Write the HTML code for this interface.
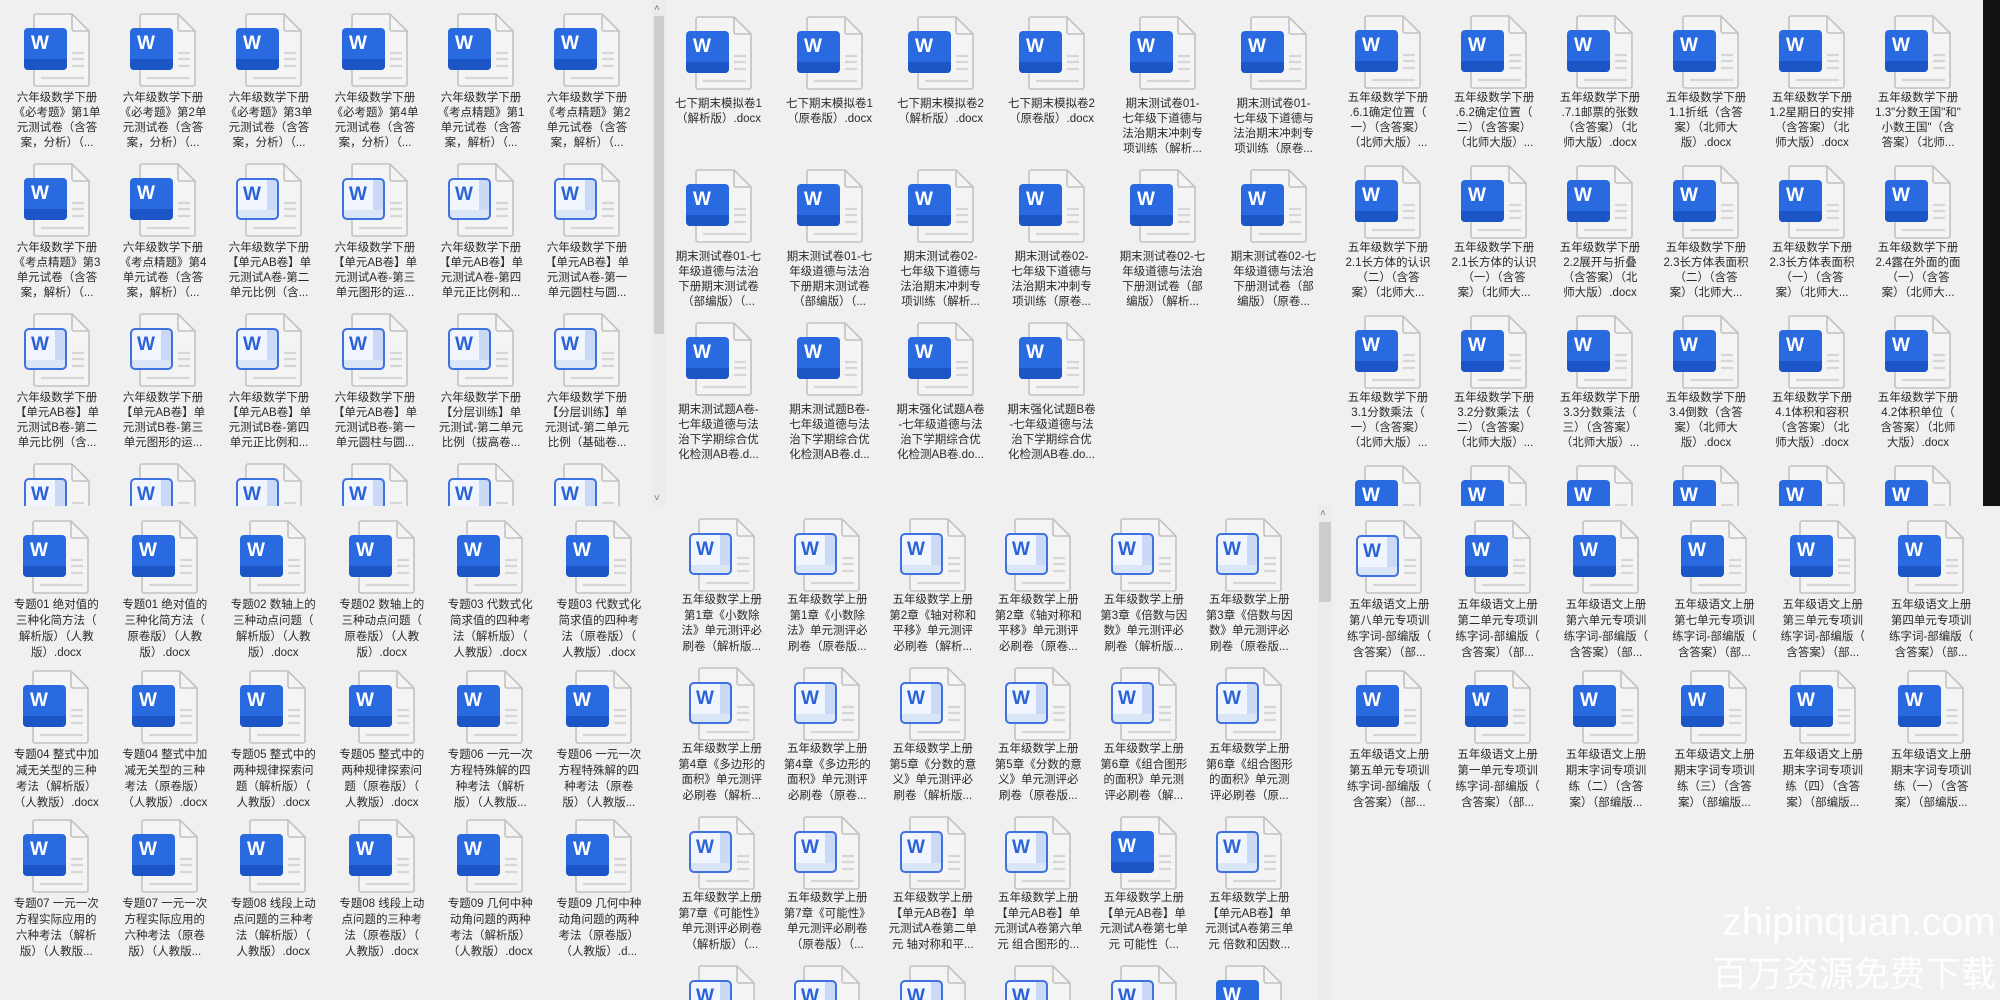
<!DOCTYPE html>
<html style="width:2000px;height:1000px;overflow:hidden"><head><meta charset="utf-8">
<style>
*{margin:0;padding:0;box-sizing:border-box}
body{width:2000px;height:1000px;overflow:hidden;background:#f0f0f0;position:relative;font-family:"Liberation Sans","Noto Sans CJK SC",sans-serif}
.p{position:absolute;overflow:hidden;background:#f0f0f0}
.g{position:absolute;display:grid}
.i{text-align:center;overflow:visible}
.i svg{display:block;width:66px;height:74px;margin:0 auto}
.t{font-size:11.5px;color:#2a2a2a;white-space:nowrap}
.sb{position:absolute;background:#ececec}
.th{position:absolute;background:#cdcdcd;border-radius:1px}
.ar{position:absolute;font-size:10px;color:#777;line-height:10px}
</style></head><body>
<svg width="0" height="0" style="position:absolute;top:0;left:0">
<defs>
<symbol id="a" viewBox="0 0 66 74">
<path d="M12 1h36l17 17v53a2 2 0 0 1-2 2H12a2 2 0 0 1-2-2V3a2 2 0 0 1 2-2z" fill="#f4f4f4" stroke="#c2c2c2" stroke-width="1.6"/>
<path d="M48 1v15a2 2 0 0 0 2 2h15" fill="none" stroke="#c2c2c2" stroke-width="1.6"/>
<g stroke="#d6d6d6" stroke-width="2.2"><path d="M48 40h12M48 46h12M48 53h12M17 65h43"/></g>
<rect x="0" y="15" width="43" height="42" rx="4" fill="#2a6ae0"/>
<path d="M0 46h43v7a4 4 0 0 1-4 4H4a4 4 0 0 1-4-4z" fill="#1b55c6"/>
<text x="16" y="36" font-family="Liberation Sans" font-weight="bold" font-size="19" fill="#fff" text-anchor="middle">W</text>
</symbol>
<symbol id="b" viewBox="0 0 66 74">
<path d="M12 1h36l17 17v53a2 2 0 0 1-2 2H12a2 2 0 0 1-2-2V3a2 2 0 0 1 2-2z" fill="#f4f4f4" stroke="#c2c2c2" stroke-width="1.6"/>
<path d="M48 1v15a2 2 0 0 0 2 2h15" fill="none" stroke="#c2c2c2" stroke-width="1.6"/>
<g stroke="#d6d6d6" stroke-width="2.2"><path d="M48 40h12M48 46h12M48 53h12M17 65h43"/></g>
<rect x="1" y="16" width="41" height="40" rx="4" fill="#f1f5fd"/>
<rect x="31" y="16" width="11" height="40" fill="#c9d9f6"/>
<rect x="1" y="47" width="41" height="9" fill="#dbe5f8"/>
<rect x="1" y="16" width="41" height="40" rx="4" fill="none" stroke="#3f72de" stroke-width="2"/>
<text x="16" y="37" font-family="Liberation Sans" font-weight="bold" font-size="19" fill="#2b63d6" text-anchor="middle">W</text>
</symbol>
</defs></svg>

<!-- TOP LEFT -->
<div class="p" style="left:0;top:0;width:668px;height:506px">
<div class="g" style="left:4px;top:13px;grid-template-columns:repeat(6,106px);grid-auto-rows:150px">
<div class="i"><svg><use href="#a"/></svg><div class="t" style="margin-top:4px;line-height:15px">六年级数学下册<br>《必考题》第1单<br>元测试卷（含答<br>案，分析）（...</div></div>
<div class="i"><svg><use href="#a"/></svg><div class="t" style="margin-top:4px;line-height:15px">六年级数学下册<br>《必考题》第2单<br>元测试卷（含答<br>案，分析）（...</div></div>
<div class="i"><svg><use href="#a"/></svg><div class="t" style="margin-top:4px;line-height:15px">六年级数学下册<br>《必考题》第3单<br>元测试卷（含答<br>案，分析）（...</div></div>
<div class="i"><svg><use href="#a"/></svg><div class="t" style="margin-top:4px;line-height:15px">六年级数学下册<br>《必考题》第4单<br>元测试卷（含答<br>案，分析）（...</div></div>
<div class="i"><svg><use href="#a"/></svg><div class="t" style="margin-top:4px;line-height:15px">六年级数学下册<br>《考点精题》第1<br>单元试卷（含答<br>案，解析）（...</div></div>
<div class="i"><svg><use href="#a"/></svg><div class="t" style="margin-top:4px;line-height:15px">六年级数学下册<br>《考点精题》第2<br>单元试卷（含答<br>案，解析）（...</div></div>
<div class="i"><svg><use href="#a"/></svg><div class="t" style="margin-top:4px;line-height:15px">六年级数学下册<br>《考点精题》第3<br>单元试卷（含答<br>案，解析）（...</div></div>
<div class="i"><svg><use href="#a"/></svg><div class="t" style="margin-top:4px;line-height:15px">六年级数学下册<br>《考点精题》第4<br>单元试卷（含答<br>案，解析）（...</div></div>
<div class="i"><svg><use href="#b"/></svg><div class="t" style="margin-top:4px;line-height:15px">六年级数学下册<br>【单元AB卷】单<br>元测试A卷-第二<br>单元比例（含...</div></div>
<div class="i"><svg><use href="#b"/></svg><div class="t" style="margin-top:4px;line-height:15px">六年级数学下册<br>【单元AB卷】单<br>元测试A卷-第三<br>单元图形的运...</div></div>
<div class="i"><svg><use href="#b"/></svg><div class="t" style="margin-top:4px;line-height:15px">六年级数学下册<br>【单元AB卷】单<br>元测试A卷-第四<br>单元正比例和...</div></div>
<div class="i"><svg><use href="#b"/></svg><div class="t" style="margin-top:4px;line-height:15px">六年级数学下册<br>【单元AB卷】单<br>元测试A卷-第一<br>单元圆柱与圆...</div></div>
<div class="i"><svg><use href="#b"/></svg><div class="t" style="margin-top:4px;line-height:15px">六年级数学下册<br>【单元AB卷】单<br>元测试B卷-第二<br>单元比例（含...</div></div>
<div class="i"><svg><use href="#b"/></svg><div class="t" style="margin-top:4px;line-height:15px">六年级数学下册<br>【单元AB卷】单<br>元测试B卷-第三<br>单元图形的运...</div></div>
<div class="i"><svg><use href="#b"/></svg><div class="t" style="margin-top:4px;line-height:15px">六年级数学下册<br>【单元AB卷】单<br>元测试B卷-第四<br>单元正比例和...</div></div>
<div class="i"><svg><use href="#b"/></svg><div class="t" style="margin-top:4px;line-height:15px">六年级数学下册<br>【单元AB卷】单<br>元测试B卷-第一<br>单元圆柱与圆...</div></div>
<div class="i"><svg><use href="#b"/></svg><div class="t" style="margin-top:4px;line-height:15px">六年级数学下册<br>【分层训练】单<br>元测试-第二单元<br>比例（拔高卷...</div></div>
<div class="i"><svg><use href="#b"/></svg><div class="t" style="margin-top:4px;line-height:15px">六年级数学下册<br>【分层训练】单<br>元测试-第二单元<br>比例（基础卷...</div></div>
<div class="i"><svg><use href="#b"/></svg></div>
<div class="i"><svg><use href="#b"/></svg></div>
<div class="i"><svg><use href="#b"/></svg></div>
<div class="i"><svg><use href="#b"/></svg></div>
<div class="i"><svg><use href="#b"/></svg></div>
<div class="i"><svg><use href="#b"/></svg></div>
</div>
<div class="sb" style="left:652px;top:0;width:14px;height:506px"></div>
<div class="th" style="left:654px;top:16px;width:10px;height:318px"></div>
<div class="ar" style="left:654px;top:4px">˄</div>
<div class="ar" style="left:654px;top:494px">˅</div>
</div>

<!-- TOP MIDDLE -->
<div class="p" style="left:668px;top:0;width:668px;height:506px">
<div class="g" style="left:-5px;top:16px;grid-template-columns:repeat(6,111px);grid-auto-rows:153px">
<div class="i"><svg><use href="#a"/></svg><div class="t" style="margin-top:7px;line-height:15px">七下期末模拟卷1<br>（解析版）.docx</div></div>
<div class="i"><svg><use href="#a"/></svg><div class="t" style="margin-top:7px;line-height:15px">七下期末模拟卷1<br>（原卷版）.docx</div></div>
<div class="i"><svg><use href="#a"/></svg><div class="t" style="margin-top:7px;line-height:15px">七下期末模拟卷2<br>（解析版）.docx</div></div>
<div class="i"><svg><use href="#a"/></svg><div class="t" style="margin-top:7px;line-height:15px">七下期末模拟卷2<br>（原卷版）.docx</div></div>
<div class="i"><svg><use href="#a"/></svg><div class="t" style="margin-top:7px;line-height:15px">期末测试卷01-<br>七年级下道德与<br>法治期末冲刺专<br>项训练（解析...</div></div>
<div class="i"><svg><use href="#a"/></svg><div class="t" style="margin-top:7px;line-height:15px">期末测试卷01-<br>七年级下道德与<br>法治期末冲刺专<br>项训练（原卷...</div></div>
<div class="i"><svg><use href="#a"/></svg><div class="t" style="margin-top:7px;line-height:15px">期末测试卷01-七<br>年级道德与法治<br>下册期末测试卷<br>（部编版）（...</div></div>
<div class="i"><svg><use href="#a"/></svg><div class="t" style="margin-top:7px;line-height:15px">期末测试卷01-七<br>年级道德与法治<br>下册期末测试卷<br>（部编版）（...</div></div>
<div class="i"><svg><use href="#a"/></svg><div class="t" style="margin-top:7px;line-height:15px">期末测试卷02-<br>七年级下道德与<br>法治期末冲刺专<br>项训练（解析...</div></div>
<div class="i"><svg><use href="#a"/></svg><div class="t" style="margin-top:7px;line-height:15px">期末测试卷02-<br>七年级下道德与<br>法治期末冲刺专<br>项训练（原卷...</div></div>
<div class="i"><svg><use href="#a"/></svg><div class="t" style="margin-top:7px;line-height:15px">期末测试卷02-七<br>年级道德与法治<br>下册测试卷（部<br>编版）（解析...</div></div>
<div class="i"><svg><use href="#a"/></svg><div class="t" style="margin-top:7px;line-height:15px">期末测试卷02-七<br>年级道德与法治<br>下册测试卷（部<br>编版）（原卷...</div></div>
<div class="i"><svg><use href="#a"/></svg><div class="t" style="margin-top:7px;line-height:15px">期末测试题A卷-<br>七年级道德与法<br>治下学期综合优<br>化检测AB卷.d...</div></div>
<div class="i"><svg><use href="#a"/></svg><div class="t" style="margin-top:7px;line-height:15px">期末测试题B卷-<br>七年级道德与法<br>治下学期综合优<br>化检测AB卷.d...</div></div>
<div class="i"><svg><use href="#a"/></svg><div class="t" style="margin-top:7px;line-height:15px">期末强化试题A卷<br>-七年级道德与法<br>治下学期综合优<br>化检测AB卷.do...</div></div>
<div class="i"><svg><use href="#a"/></svg><div class="t" style="margin-top:7px;line-height:15px">期末强化试题B卷<br>-七年级道德与法<br>治下学期综合优<br>化检测AB卷.do...</div></div>
</div>
</div>

<!-- TOP RIGHT -->
<div class="p" style="left:1336px;top:0;width:647px;height:506px">
<div class="g" style="left:-1px;top:15px;grid-template-columns:repeat(6,106px);grid-auto-rows:150px">
<div class="i"><svg><use href="#a"/></svg><div class="t" style="margin-top:2px;line-height:15px">五年级数学下册<br>.6.1确定位置（<br>一）（含答案）<br>（北师大版）...</div></div>
<div class="i"><svg><use href="#a"/></svg><div class="t" style="margin-top:2px;line-height:15px">五年级数学下册<br>.6.2确定位置（<br>二）（含答案）<br>（北师大版）...</div></div>
<div class="i"><svg><use href="#a"/></svg><div class="t" style="margin-top:2px;line-height:15px">五年级数学下册<br>.7.1邮票的张数<br>（含答案）（北<br>师大版）.docx</div></div>
<div class="i"><svg><use href="#a"/></svg><div class="t" style="margin-top:2px;line-height:15px">五年级数学下册<br>1.1折纸（含答<br>案）（北师大<br>版）.docx</div></div>
<div class="i"><svg><use href="#a"/></svg><div class="t" style="margin-top:2px;line-height:15px">五年级数学下册<br>1.2星期日的安排<br>（含答案）（北<br>师大版）.docx</div></div>
<div class="i"><svg><use href="#a"/></svg><div class="t" style="margin-top:2px;line-height:15px">五年级数学下册<br>1.3"分数王国"和"<br>小数王国"（含<br>答案）（北师...</div></div>
<div class="i"><svg><use href="#a"/></svg><div class="t" style="margin-top:2px;line-height:15px">五年级数学下册<br>2.1长方体的认识<br>（二）（含答<br>案）（北师大...</div></div>
<div class="i"><svg><use href="#a"/></svg><div class="t" style="margin-top:2px;line-height:15px">五年级数学下册<br>2.1长方体的认识<br>（一）（含答<br>案）（北师大...</div></div>
<div class="i"><svg><use href="#a"/></svg><div class="t" style="margin-top:2px;line-height:15px">五年级数学下册<br>2.2展开与折叠<br>（含答案）（北<br>师大版）.docx</div></div>
<div class="i"><svg><use href="#a"/></svg><div class="t" style="margin-top:2px;line-height:15px">五年级数学下册<br>2.3长方体表面积<br>（二）（含答<br>案）（北师大...</div></div>
<div class="i"><svg><use href="#a"/></svg><div class="t" style="margin-top:2px;line-height:15px">五年级数学下册<br>2.3长方体表面积<br>（一）（含答<br>案）（北师大...</div></div>
<div class="i"><svg><use href="#a"/></svg><div class="t" style="margin-top:2px;line-height:15px">五年级数学下册<br>2.4露在外面的面<br>（一）（含答<br>案）（北师大...</div></div>
<div class="i"><svg><use href="#a"/></svg><div class="t" style="margin-top:2px;line-height:15px">五年级数学下册<br>3.1分数乘法（<br>一）（含答案）<br>（北师大版）...</div></div>
<div class="i"><svg><use href="#a"/></svg><div class="t" style="margin-top:2px;line-height:15px">五年级数学下册<br>3.2分数乘法（<br>二）（含答案）<br>（北师大版）...</div></div>
<div class="i"><svg><use href="#a"/></svg><div class="t" style="margin-top:2px;line-height:15px">五年级数学下册<br>3.3分数乘法（<br>三）（含答案）<br>（北师大版）...</div></div>
<div class="i"><svg><use href="#a"/></svg><div class="t" style="margin-top:2px;line-height:15px">五年级数学下册<br>3.4倒数（含答<br>案）（北师大<br>版）.docx</div></div>
<div class="i"><svg><use href="#a"/></svg><div class="t" style="margin-top:2px;line-height:15px">五年级数学下册<br>4.1体积和容积<br>（含答案）（北<br>师大版）.docx</div></div>
<div class="i"><svg><use href="#a"/></svg><div class="t" style="margin-top:2px;line-height:15px">五年级数学下册<br>4.2体积单位（<br>含答案）（北师<br>大版）.docx</div></div>
<div class="i"><svg><use href="#a"/></svg></div>
<div class="i"><svg><use href="#a"/></svg></div>
<div class="i"><svg><use href="#a"/></svg></div>
<div class="i"><svg><use href="#a"/></svg></div>
<div class="i"><svg><use href="#a"/></svg></div>
<div class="i"><svg><use href="#a"/></svg></div>
</div>
</div>
<div style="position:absolute;left:1983px;top:0;width:17px;height:506px;background:#111"></div>

<!-- BOTTOM LEFT -->
<div class="p" style="left:0;top:506px;width:668px;height:494px">
<div class="g" style="left:2px;top:14px;grid-template-columns:repeat(6,108.5px);grid-auto-rows:149.5px">
<div class="i"><svg><use href="#a"/></svg><div class="t" style="margin-top:3px;line-height:16px">专题01 绝对值的<br>三种化简方法（<br>解析版）（人教<br>版）.docx</div></div>
<div class="i"><svg><use href="#a"/></svg><div class="t" style="margin-top:3px;line-height:16px">专题01 绝对值的<br>三种化简方法（<br>原卷版）（人教<br>版）.docx</div></div>
<div class="i"><svg><use href="#a"/></svg><div class="t" style="margin-top:3px;line-height:16px">专题02 数轴上的<br>三种动点问题（<br>解析版）（人教<br>版）.docx</div></div>
<div class="i"><svg><use href="#a"/></svg><div class="t" style="margin-top:3px;line-height:16px">专题02 数轴上的<br>三种动点问题（<br>原卷版）（人教<br>版）.docx</div></div>
<div class="i"><svg><use href="#a"/></svg><div class="t" style="margin-top:3px;line-height:16px">专题03 代数式化<br>简求值的四种考<br>法（解析版）（<br>人教版）.docx</div></div>
<div class="i"><svg><use href="#a"/></svg><div class="t" style="margin-top:3px;line-height:16px">专题03 代数式化<br>简求值的四种考<br>法（原卷版）（<br>人教版）.docx</div></div>
<div class="i"><svg><use href="#a"/></svg><div class="t" style="margin-top:3px;line-height:16px">专题04 整式中加<br>减无关型的三种<br>考法（解析版）<br>（人教版）.docx</div></div>
<div class="i"><svg><use href="#a"/></svg><div class="t" style="margin-top:3px;line-height:16px">专题04 整式中加<br>减无关型的三种<br>考法（原卷版）<br>（人教版）.docx</div></div>
<div class="i"><svg><use href="#a"/></svg><div class="t" style="margin-top:3px;line-height:16px">专题05 整式中的<br>两种规律探索问<br>题（解析版）（<br>人教版）.docx</div></div>
<div class="i"><svg><use href="#a"/></svg><div class="t" style="margin-top:3px;line-height:16px">专题05 整式中的<br>两种规律探索问<br>题（原卷版）（<br>人教版）.docx</div></div>
<div class="i"><svg><use href="#a"/></svg><div class="t" style="margin-top:3px;line-height:16px">专题06 一元一次<br>方程特殊解的四<br>种考法（解析<br>版）（人教版...</div></div>
<div class="i"><svg><use href="#a"/></svg><div class="t" style="margin-top:3px;line-height:16px">专题06 一元一次<br>方程特殊解的四<br>种考法（原卷<br>版）（人教版...</div></div>
<div class="i"><svg><use href="#a"/></svg><div class="t" style="margin-top:3px;line-height:16px">专题07 一元一次<br>方程实际应用的<br>六种考法（解析<br>版）（人教版...</div></div>
<div class="i"><svg><use href="#a"/></svg><div class="t" style="margin-top:3px;line-height:16px">专题07 一元一次<br>方程实际应用的<br>六种考法（原卷<br>版）（人教版...</div></div>
<div class="i"><svg><use href="#a"/></svg><div class="t" style="margin-top:3px;line-height:16px">专题08 线段上动<br>点问题的三种考<br>法（解析版）（<br>人教版）.docx</div></div>
<div class="i"><svg><use href="#a"/></svg><div class="t" style="margin-top:3px;line-height:16px">专题08 线段上动<br>点问题的三种考<br>法（原卷版）（<br>人教版）.docx</div></div>
<div class="i"><svg><use href="#a"/></svg><div class="t" style="margin-top:3px;line-height:16px">专题09 几何中种<br>动角问题的两种<br>考法（解析版）<br>（人教版）.docx</div></div>
<div class="i"><svg><use href="#a"/></svg><div class="t" style="margin-top:3px;line-height:16px">专题09 几何中种<br>动角问题的两种<br>考法（原卷版）<br>（人教版）.d...</div></div>
</div>
</div>

<!-- BOTTOM MIDDLE -->
<div class="p" style="left:668px;top:506px;width:668px;height:494px">
<div class="g" style="left:1px;top:12px;grid-template-columns:repeat(6,105.5px);grid-auto-rows:149px">
<div class="i"><svg><use href="#b"/></svg><div class="t" style="margin-top:1px;line-height:15.5px">五年级数学上册<br>第1章《小数除<br>法》单元测评必<br>刷卷（解析版...</div></div>
<div class="i"><svg><use href="#b"/></svg><div class="t" style="margin-top:1px;line-height:15.5px">五年级数学上册<br>第1章《小数除<br>法》单元测评必<br>刷卷（原卷版...</div></div>
<div class="i"><svg><use href="#b"/></svg><div class="t" style="margin-top:1px;line-height:15.5px">五年级数学上册<br>第2章《轴对称和<br>平移》单元测评<br>必刷卷（解析...</div></div>
<div class="i"><svg><use href="#b"/></svg><div class="t" style="margin-top:1px;line-height:15.5px">五年级数学上册<br>第2章《轴对称和<br>平移》单元测评<br>必刷卷（原卷...</div></div>
<div class="i"><svg><use href="#b"/></svg><div class="t" style="margin-top:1px;line-height:15.5px">五年级数学上册<br>第3章《倍数与因<br>数》单元测评必<br>刷卷（解析版...</div></div>
<div class="i"><svg><use href="#b"/></svg><div class="t" style="margin-top:1px;line-height:15.5px">五年级数学上册<br>第3章《倍数与因<br>数》单元测评必<br>刷卷（原卷版...</div></div>
<div class="i"><svg><use href="#b"/></svg><div class="t" style="margin-top:1px;line-height:15.5px">五年级数学上册<br>第4章《多边形的<br>面积》单元测评<br>必刷卷（解析...</div></div>
<div class="i"><svg><use href="#b"/></svg><div class="t" style="margin-top:1px;line-height:15.5px">五年级数学上册<br>第4章《多边形的<br>面积》单元测评<br>必刷卷（原卷...</div></div>
<div class="i"><svg><use href="#b"/></svg><div class="t" style="margin-top:1px;line-height:15.5px">五年级数学上册<br>第5章《分数的意<br>义》单元测评必<br>刷卷（解析版...</div></div>
<div class="i"><svg><use href="#b"/></svg><div class="t" style="margin-top:1px;line-height:15.5px">五年级数学上册<br>第5章《分数的意<br>义》单元测评必<br>刷卷（原卷版...</div></div>
<div class="i"><svg><use href="#b"/></svg><div class="t" style="margin-top:1px;line-height:15.5px">五年级数学上册<br>第6章《组合图形<br>的面积》单元测<br>评必刷卷（解...</div></div>
<div class="i"><svg><use href="#b"/></svg><div class="t" style="margin-top:1px;line-height:15.5px">五年级数学上册<br>第6章《组合图形<br>的面积》单元测<br>评必刷卷（原...</div></div>
<div class="i"><svg><use href="#b"/></svg><div class="t" style="margin-top:1px;line-height:15.5px">五年级数学上册<br>第7章《可能性》<br>单元测评必刷卷<br>（解析版）（...</div></div>
<div class="i"><svg><use href="#b"/></svg><div class="t" style="margin-top:1px;line-height:15.5px">五年级数学上册<br>第7章《可能性》<br>单元测评必刷卷<br>（原卷版）（...</div></div>
<div class="i"><svg><use href="#b"/></svg><div class="t" style="margin-top:1px;line-height:15.5px">五年级数学上册<br>【单元AB卷】单<br>元测试A卷第二单<br>元 轴对称和平...</div></div>
<div class="i"><svg><use href="#b"/></svg><div class="t" style="margin-top:1px;line-height:15.5px">五年级数学上册<br>【单元AB卷】单<br>元测试A卷第六单<br>元 组合图形的...</div></div>
<div class="i"><svg><use href="#a"/></svg><div class="t" style="margin-top:1px;line-height:15.5px">五年级数学上册<br>【单元AB卷】单<br>元测试A卷第七单<br>元 可能性（...</div></div>
<div class="i"><svg><use href="#b"/></svg><div class="t" style="margin-top:1px;line-height:15.5px">五年级数学上册<br>【单元AB卷】单<br>元测试A卷第三单<br>元 倍数和因数...</div></div>
<div class="i"><svg><use href="#b"/></svg></div>
<div class="i"><svg><use href="#b"/></svg></div>
<div class="i"><svg><use href="#b"/></svg></div>
<div class="i"><svg><use href="#b"/></svg></div>
<div class="i"><svg><use href="#b"/></svg></div>
<div class="i"><svg><use href="#a"/></svg></div>
</div>
<div class="sb" style="left:650px;top:0;width:14px;height:494px"></div>
<div class="th" style="left:651px;top:16px;width:12px;height:80px"></div>
<div class="ar" style="left:652px;top:3px">˄</div>
</div>

<!-- BOTTOM RIGHT -->
<div class="p" style="left:1336px;top:506px;width:664px;height:494px">
<div class="g" style="left:-1px;top:14px;grid-template-columns:repeat(6,108.4px);grid-auto-rows:149.5px">
<div class="i"><svg><use href="#b"/></svg><div class="t" style="margin-top:3px;line-height:16px">五年级语文上册<br>第八单元专项训<br>练字词-部编版（<br>含答案）（部...</div></div>
<div class="i"><svg><use href="#a"/></svg><div class="t" style="margin-top:3px;line-height:16px">五年级语文上册<br>第二单元专项训<br>练字词-部编版（<br>含答案）（部...</div></div>
<div class="i"><svg><use href="#a"/></svg><div class="t" style="margin-top:3px;line-height:16px">五年级语文上册<br>第六单元专项训<br>练字词-部编版（<br>含答案）（部...</div></div>
<div class="i"><svg><use href="#a"/></svg><div class="t" style="margin-top:3px;line-height:16px">五年级语文上册<br>第七单元专项训<br>练字词-部编版（<br>含答案）（部...</div></div>
<div class="i"><svg><use href="#a"/></svg><div class="t" style="margin-top:3px;line-height:16px">五年级语文上册<br>第三单元专项训<br>练字词-部编版（<br>含答案）（部...</div></div>
<div class="i"><svg><use href="#a"/></svg><div class="t" style="margin-top:3px;line-height:16px">五年级语文上册<br>第四单元专项训<br>练字词-部编版（<br>含答案）（部...</div></div>
<div class="i"><svg><use href="#a"/></svg><div class="t" style="margin-top:3px;line-height:16px">五年级语文上册<br>第五单元专项训<br>练字词-部编版（<br>含答案）（部...</div></div>
<div class="i"><svg><use href="#a"/></svg><div class="t" style="margin-top:3px;line-height:16px">五年级语文上册<br>第一单元专项训<br>练字词-部编版（<br>含答案）（部...</div></div>
<div class="i"><svg><use href="#a"/></svg><div class="t" style="margin-top:3px;line-height:16px">五年级语文上册<br>期末字词专项训<br>练（二）（含答<br>案）（部编版...</div></div>
<div class="i"><svg><use href="#a"/></svg><div class="t" style="margin-top:3px;line-height:16px">五年级语文上册<br>期末字词专项训<br>练（三）（含答<br>案）（部编版...</div></div>
<div class="i"><svg><use href="#a"/></svg><div class="t" style="margin-top:3px;line-height:16px">五年级语文上册<br>期末字词专项训<br>练（四）（含答<br>案）（部编版...</div></div>
<div class="i"><svg><use href="#a"/></svg><div class="t" style="margin-top:3px;line-height:16px">五年级语文上册<br>期末字词专项训<br>练（一）（含答<br>案）（部编版...</div></div>
</div>
<div style="position:absolute;left:382px;top:394px;width:282px;text-align:center;color:#fff;font-size:39px;line-height:46px;font-family:'Liberation Sans',sans-serif;opacity:.95">zhipinquan.com</div>
<div style="position:absolute;left:372px;top:444px;width:292px;text-align:center;color:#fff;font-size:35.5px;line-height:44px;font-family:'Noto Sans CJK SC',sans-serif;opacity:.95">百万资源免费下载</div>
</div>
</body></html>
